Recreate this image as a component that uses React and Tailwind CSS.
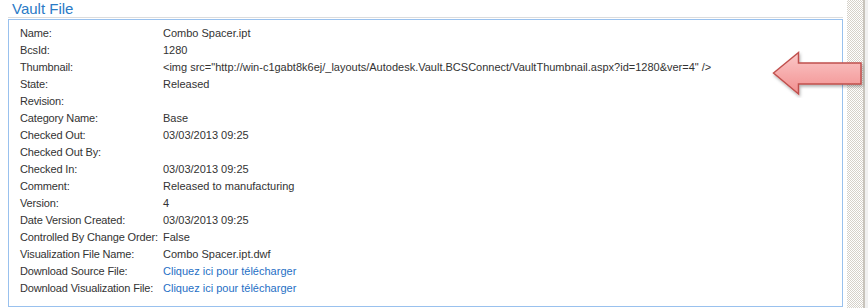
const rows = [
  ['Name:', 'Combo Spacer.ipt'],
  ['BcsId:', '1280'],
  ['Thumbnail:', '<img src="http://win-c1gabt8k6ej/_layouts/Autodesk.Vault.BCSConnect/VaultThumbnail.aspx?id=1280&ver=4" />'],
  ['State:', 'Released'],
  ['Revision:', ''],
  ['Category Name:', 'Base'],
  ['Checked Out:', '03/03/2013 09:25'],
  ['Checked Out By:', ''],
  ['Checked In:', '03/03/2013 09:25'],
  ['Comment:', 'Released to manufacturing'],
  ['Version:', '4'],
  ['Date Version Created:', '03/03/2013 09:25'],
  ['Controlled By Change Order:', 'False'],
  ['Visualization File Name:', 'Combo Spacer.ipt.dwf'],
  ['Download Source File:', 'Cliquez ici pour télécharger', true],
  ['Download Visualization File:', 'Cliquez ici pour télécharger', true],
];

function Arrow() {
  return (
    <svg className="absolute left-[771px] top-[50px]" width="94" height="48" viewBox="0 0 94 48">
      <defs>
        <linearGradient id="ag" x1="0" y1="0" x2="0" y2="1">
          <stop offset="0" stopColor="#fbc9c9" />
          <stop offset="1" stopColor="#f28f8f" />
        </linearGradient>
        <filter id="sh" x="-20%" y="-20%" width="140%" height="150%">
          <feDropShadow dx="1" dy="2" stdDeviation="1.5" floodColor="#000" floodOpacity="0.3" />
        </filter>
      </defs>
      <path
        d="M2.5 23 L27.5 2.5 L27.5 13 L90 13 L90 34 L27.5 34 L27.5 44 Z"
        fill="url(#ag)"
        stroke="#c0504d"
        strokeWidth="1.5"
        filter="url(#sh)"
      />
    </svg>
  );
}

export default function App() {
  return (
    <div className="relative flex h-[308px] w-[868px] bg-white font-['Liberation_Sans',Arial,sans-serif] text-[11px] text-[#333333]">
      <div className="flex w-[847px] flex-col">
        <div className="ml-[8px] mr-[4px] h-[18px] border-b border-[#dcdcdc] pl-[4px] text-[15px] leading-[17px] text-[#2a7ac6]">
          Vault File
        </div>
        <div className="ml-[8px] mr-[4px] mt-px h-[288px] border border-[#99c1ee] pl-[11px] pt-[5px]">
          {rows.map(([label, value, link]) => (
            <div key={label} className="flex h-[17px] items-center leading-[17px]">
              <span className="w-[143px] shrink-0 whitespace-nowrap tracking-[-0.15px]">{label}</span>
              <span className={`whitespace-nowrap ${link ? 'text-[#1f6fc5]' : ''}`}>{value}</span>
            </div>
          ))}
        </div>
      </div>
      <div className="flex w-[21px]">
        <div className="w-[16px] bg-[repeating-conic-gradient(#d6d2ca_0_25%,#ffffff_0_50%)] bg-[length:2px_2px]" />
        <div className="w-[2px] bg-[#c8c4bc]" />
        <div className="w-[3px] bg-[#f0f0f0]" />
      </div>
      <Arrow />
    </div>
  );
}
